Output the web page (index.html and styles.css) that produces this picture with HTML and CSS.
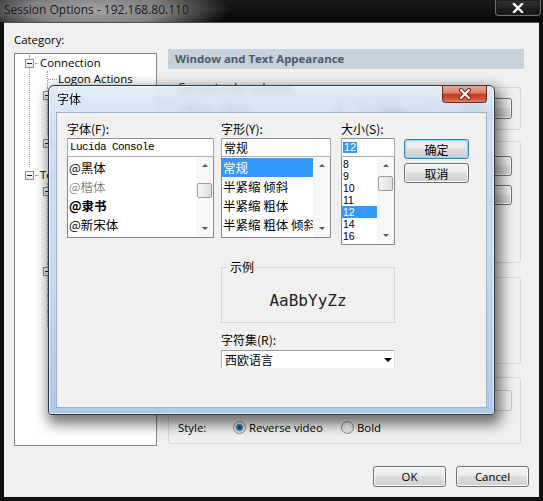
FILE: index.html
```html
<!DOCTYPE html>
<html>
<head>
<meta charset="utf-8">
<title>Session Options</title>
<link rel="stylesheet" href="styles.css">
</head>
<body>
<div class="window">
  <div class="titlebar">
    <span class="wtitle">Session Options - 192.168.80.110</span>
    <div class="wclose"><svg width="12" height="10" viewBox="0 0 12 10"><path d="M2 1 L10 9 M10 1 L2 9" stroke="#fff" stroke-width="2.4" stroke-linecap="square"/></svg></div>
  </div>
  <div class="client">
    <div class="main">
      <div class="left">
        <div class="cat-label">Category:</div>
        <div class="tree">
          <ul class="tv">
            <li>
              <div class="tr"><i class="exp"></i><i class="hl"></i><span>Connection</span></div>
              <ul>
                <li><div class="tr"><i class="hl2"></i><span>Logon Actions</span></div></li>
                <li>
                  <div class="tr"><i class="exp"></i><i class="hl"></i></div>
                  <ul>
                    <li><div class="tr"><i class="hl2"></i></div></li>
                    <li><div class="tr"><i class="hl2"></i></div></li>
                  </ul>
                </li>
                <li>
                  <div class="tr"><i class="exp"></i><i class="hl"></i></div>
                  <ul>
                    <li><div class="tr"><i class="hl2"></i></div></li>
                  </ul>
                </li>
              </ul>
            </li>
            <li>
              <div class="tr"><i class="exp"></i><i class="hl"></i><span>Terminal</span></div>
              <ul>
                <li>
                  <div class="tr"><i class="exp"></i><i class="hl"></i></div>
                  <ul>
                    <li><div class="tr"><i class="hl2"></i></div></li>
                    <li><div class="tr"><i class="hl2"></i></div></li>
                    <li><div class="tr"><i class="hl2"></i></div></li>
                    <li><div class="tr"><i class="hl2"></i></div></li>
                  </ul>
                </li>
                <li>
                  <div class="tr"><i class="exp"></i><i class="hl"></i></div>
                  <ul>
                    <li><div class="tr"><i class="hl2"></i></div></li>
                  </ul>
                </li>
                <li><div class="tr"><i class="hl2"></i></div></li>
                <li><div class="tr"><i class="hl2"></i></div></li>
                <li><div class="tr"><i class="hl2"></i></div></li>
              </ul>
            </li>
          </ul>
        </div>
      </div>
      <div class="panel">
        <div class="phead">Window and Text Appearance</div>
        <fieldset class="grp g1">
          <legend>Current color scheme</legend>
          <div class="grow">
            <div class="pcombo">White / Black<i class="dd"></i></div>
            <button class="btn pbtn">New...</button>
            <button class="btn pbtn">Edit...</button>
          </div>
        </fieldset>
        <fieldset class="grp g2">
          <div class="grow r1"><span class="gtext"></span><button class="btn pbtn2"></button></div>
          <div class="grow r2"><span class="gtext"></span><button class="btn pbtn2"></button></div>
        </fieldset>
        <fieldset class="grp g3">
        </fieldset>
        <fieldset class="grp g4">
          <div class="grow r1"><span class="gtext"></span><div class="pbox"></div></div>
          <div class="style-row">
            <span class="slabel">Style:</span>
            <span class="ropt"><i class="radio on"></i><span>Reverse video</span></span>
            <span class="ropt"><i class="radio"></i><span>Bold</span></span>
          </div>
        </fieldset>
      </div>
    </div>
    <div class="footer">
      <button class="btn fbtn">OK</button>
      <button class="btn fbtn">Cancel</button>
    </div>
  </div>

  <div class="dialog">
    <div class="dlg-title">
      <span class="dt">字体</span>
      <div class="dlg-close"><svg width="16" height="12" viewBox="0 0 16 12"><path d="M4 2 L12 10 M12 2 L4 10" stroke="#6a2418" stroke-width="4" stroke-linecap="round"/><path d="M4 2 L12 10 M12 2 L4 10" stroke="#fff" stroke-width="2.2" stroke-linecap="round"/></svg></div>
    </div>
    <div class="dlg-client">
      <div class="dlg-top">
        <div class="col col-font">
          <div class="dlabel">字体(F):</div>
          <div class="dinput mono">Lucida Console</div>
          <div class="dlist flist">
            <div class="items">
              <div class="it f1">@黑体</div>
              <div class="it f2">@楷体</div>
              <div class="it f3">@隶书</div>
              <div class="it f4">@新宋体</div>
            </div>
            <div class="sb"><div class="sba up"></div><div class="sbt"><div class="thumb t-font"></div></div><div class="sba dn"></div></div>
          </div>
        </div>
        <div class="col col-style">
          <div class="dlabel">字形(Y):</div>
          <div class="dinput">常规</div>
          <div class="dlist flist">
            <div class="items">
              <div class="it sel">常规</div>
              <div class="it">半紧缩 倾斜</div>
              <div class="it">半紧缩 粗体</div>
              <div class="it">半紧缩 粗体 倾斜</div>
            </div>
            <div class="sb"><div class="sba up"></div><div class="sbt"></div><div class="sba dn"></div></div>
          </div>
        </div>
        <div class="col col-size">
          <div class="dlabel">大小(S):</div>
          <div class="dinput"><span class="hi">12</span></div>
          <div class="dlist slist">
            <div class="items">
              <div class="it">8</div>
              <div class="it">9</div>
              <div class="it">10</div>
              <div class="it">11</div>
              <div class="it sel">12</div>
              <div class="it">14</div>
              <div class="it">16</div>
            </div>
            <div class="sb"><div class="sba up"></div><div class="sbt"><div class="thumb t-size"></div></div><div class="sba dn"></div></div>
          </div>
        </div>
        <div class="col col-btns">
          <button class="btn dbtn focus">确定</button>
          <button class="btn dbtn">取消</button>
        </div>
      </div>
      <div class="dlg-bottom">
        <fieldset class="sample">
          <legend>示例</legend>
          <div class="sample-text">AaBbYyZz</div>
        </fieldset>
        <div class="dlabel cs-label">字符集(R):</div>
        <div class="cs-combo"><span>西欧语言</span><i class="dd"></i></div>
      </div>
    </div>
  </div>
</div>
</body>
</html>
```

FILE: styles.css
```css
* { box-sizing: border-box; }
html, body { margin: 0; padding: 0; }
body {
  width: 543px;
  height: 501px;
  overflow: hidden;
  background: #0e0e0e;
  font-family: "Open Sans", "Noto Sans", sans-serif;
  font-size: 11.4px;
  color: #000;
}
button { font: inherit; color: #000; padding: 0; }

.window {
  position: relative;
  width: 543px;
  height: 501px;
  display: flex;
  flex-direction: column;
  background: #101010;
}

/* ---------- outer title bar ---------- */
.titlebar {
  height: 22px;
  display: flex;
  align-items: flex-start;
  background:
    radial-gradient(ellipse 135px 30px at 95px 10px, #a2a2a2 0%, #808080 50%, rgba(40,40,40,0) 100%),
    linear-gradient(#1a1a1a, #060606);
}
.wtitle {
  padding: 2px 0 0 4px;
  line-height: 16px;
  font-size: 12px;
  color: #1a1a1a;
  white-space: nowrap;
}
.wclose {
  margin-left: auto;
  margin-right: 2px;
  width: 46px;
  height: 16px;
  border: 1px solid #707070;
  border-top: 0;
  border-radius: 0 0 4px 4px;
  background: linear-gradient(#333, #111);
  box-shadow: inset 0 0 0 1px #1e1e1e;
  display: flex;
  align-items: center;
  justify-content: center;
}

/* ---------- client ---------- */
.client {
  flex: 1;
  margin: 0 4px 4px;
  background: #f0f0f0;
  border-top: 1px solid #505050;
  padding: 10px 10px 0 10px;
  display: flex;
  flex-direction: column;
}
.main { display: flex; align-items: flex-start; }
.left { width: 143px; }
.cat-label { height: 14px; line-height: 14px; }

.tree {
  margin-top: 6px;
  height: 393px;
  background: #fff;
  border: 1px solid #828790;
  padding-top: 1px;
  overflow: hidden;
}
.tv, .tv ul { list-style: none; margin: 0; padding: 0; }
.tv > li { margin-left: 14px; }
.tv ul > li { margin-left: 17px; }
.tv li { border-left: 1px solid transparent; }
.tv li:not(:last-child) { border-left: 1px dotted #a0a0a0; }
.tr {
  height: 16px;
  margin-left: -5px;
  display: flex;
  align-items: center;
  white-space: nowrap;
  line-height: 16px;
}
.exp {
  flex: none;
  width: 9px;
  height: 9px;
  border: 1px solid #919191;
  background: linear-gradient(#222, #222) center / 5px 1px no-repeat, linear-gradient(#fff, #e4e4e4);
}
.hl {
  flex: none;
  width: 4px;
  height: 1px;
  margin-left: 1px;
  border-top: 1px dotted #a0a0a0;
}
.hl2 {
  flex: none;
  width: 9px;
  height: 1px;
  margin-left: 5px;
  border-top: 1px dotted #a0a0a0;
}
.tr span { margin-left: 1px; }

/* ---------- right panel ---------- */
.panel { margin-left: 11px; margin-top: 16px; width: 356px; }
.phead {
  height: 20px;
  line-height: 20px;
  background: #c6d1dc;
  color: #4a5b6d;
  font-weight: 700;
  padding-left: 7px;
}
.grp {
  margin: 0 3px 0 0;
  padding: 0 8px 0 9px;
  border: 1px solid #d6d6d6;
  border-radius: 3px;
  min-width: 0;
}
.grp legend { padding: 0 2px; line-height: 12px; margin-left: -2px; }
.g1 { margin-top: 12px; height: 49px; padding-top: 5px; }
.g2 { margin-top: 11px; height: 122px; padding-top: 13px; }
.g3 { margin-top: 14px; height: 87px; }
.g4 { margin-top: 13px; height: 67px; padding-top: 12px; }
.grow { display: flex; align-items: center; gap: 8px; height: 21px; }
.g2 .r2 { margin-top: 8px; }
.gtext { flex: 1; white-space: nowrap; }
.pcombo {
  width: 170px;
  height: 21px;
  border: 1px solid #a0a0a0;
  background: #fff;
  display: flex;
  align-items: center;
  padding-left: 4px;
}
.pbtn { width: 72px; height: 21px; }
.g1 .pbtn:first-of-type { margin-left: auto; }
.pbtn2 { width: 130px; height: 20px; }
.pbox { width: 120px; height: 21px; border: 1px solid #c8c8c8; border-radius: 2px; background: #f4f4f4; }
.style-row { display: flex; align-items: center; height: 16px; margin-top: 8px; }
.slabel { width: 55px; }
.ropt { display: flex; align-items: center; gap: 3px; width: 108px; }
.radio {
  flex: none;
  width: 13px;
  height: 13px;
  border-radius: 50%;
  border: 1px solid #8e8f8f;
  background: radial-gradient(circle at 50% 40%, #ffffff, #d8d8d8);
}
.radio.on {
  background:
    radial-gradient(circle at 50% 50%, #0e3c5e 0, #2a76aa 2.4px, #6fb0dc 3.6px, rgba(255,255,255,0) 4.2px),
    radial-gradient(circle at 50% 40%, #ffffff, #d8d8d8);
}

.footer {
  display: flex;
  justify-content: flex-end;
  gap: 10px;
  margin-top: 20px;
}
.btn {
  border: 1px solid #707070;
  border-radius: 3px;
  background: linear-gradient(#f2f2f2 0%, #ebebeb 45%, #dddddd 50%, #cfcfcf 100%);
  box-shadow: inset 0 0 0 1px #fbfbfb;
}
.fbtn { width: 73px; height: 21px; }

/* ---------- font dialog ---------- */
.dialog {
  position: absolute;
  left: 48px;
  top: 85px;
  width: 447px;
  height: 330px;
  border: 1px solid #2f3945;
  border-radius: 6px 6px 3px 3px;
  padding: 0 7px 6px;
  display: flex;
  flex-direction: column;
  background: linear-gradient(to bottom, rgba(222,234,247,0.80) 0px, rgba(205,222,241,0.84) 28px, rgba(192,214,238,0.92) 60%, rgba(170,200,232,0.96) 100%);
  backdrop-filter: blur(3px);
  box-shadow: 3px 6px 14px 3px rgba(0,0,0,0.55), inset 0 0 0 1px rgba(255,255,255,0.6);
  font-family: "Noto Sans CJK SC", "Noto Sans", sans-serif;
  font-size: 12px;
}
.dlg-title { height: 26px; display: flex; align-items: flex-start; }
.dt { line-height: 26px; padding-left: 1px; }
.dlg-close {
  margin-left: auto;
  margin-top: 0;
  width: 45px;
  height: 17px;
  border: 1px solid #6b2a20;
  border-top: 0;
  border-radius: 0 0 4px 4px;
  background: linear-gradient(#e9a897 0%, #dd7d68 45%, #c13a20 50%, #cf5236 80%, #e2836a 100%);
  display: flex;
  align-items: center;
  justify-content: center;
}
.dlg-client {
  flex: 1;
  border: 1px solid #9fb3c8;
  background: #f0f0f0;
  padding: 10px 0 0 10px;
}
.dlg-top { display: flex; align-items: flex-start; }
.col-font { width: 147px; }
.col-style { width: 110px; margin-left: 7px; }
.col-size { width: 54px; margin-left: 10px; }
.col-btns {
  width: 65px;
  margin-left: 9px;
  padding-top: 16px;
  display: flex;
  flex-direction: column;
  gap: 4px;
}
.dlabel { height: 12px; line-height: 12px; margin-bottom: 3px; white-space: nowrap; }
.dinput {
  height: 19px;
  border: 1px solid #abadb3;
  border-top-color: #8e8f8f;
  background: #fff;
  line-height: 17px;
  padding-left: 2px;
  white-space: nowrap;
  overflow: hidden;
}
.mono {
  font-family: "Liberation Mono", monospace;
  font-size: 11px;
  letter-spacing: -0.6px;
}
.hi {
  display: inline-block;
  vertical-align: top;
  margin-top: 3px;
  line-height: 11px;
  height: 11px;
  padding: 0 1px;
  background: #3399ff;
  color: #fff;
  margin-left: -1px;
  font-family: "Liberation Sans", sans-serif;
  font-size: 11px;
}
.dlist {
  border: 1px solid #828790;
  border-top: 0;
  background: #fff;
  display: flex;
}
.flist { height: 81px; }
.slist { height: 88px; }
.items { flex: 1; min-width: 0; padding-top: 1px; overflow: hidden; }
.it {
  height: 19px;
  line-height: 19px;
  font-size: 12.5px;
  padding-left: 1px;
  white-space: nowrap;
  overflow: hidden;
}
.slist .it {
  height: 12px;
  line-height: 12px;
  font-family: "Liberation Sans", sans-serif;
  font-size: 10.5px;
}
.sel { background: #3399ff; color: #fff; }
.f2 { color: #555; font-weight: 300; }
.f3 { font-weight: 700; }
.sb {
  flex: none;
  width: 17px;
  display: flex;
  flex-direction: column;
  background: #f7f7f7;
}
.sba { height: 17px; display: flex; align-items: center; justify-content: center; }
.sba.up::after {
  content: "";
  border-left: 3px solid transparent;
  border-right: 3px solid transparent;
  border-bottom: 3px solid #5a5a5a;
}
.sba.dn::after {
  content: "";
  border-left: 3px solid transparent;
  border-right: 3px solid transparent;
  border-top: 3px solid #5a5a5a;
}
.sbt { flex: 1; }
.thumb {
  height: 15px;
  margin: 0 1px;
  border: 1px solid #9b9b9b;
  border-radius: 2px;
  background: linear-gradient(90deg, #f6f6f6, #dedede);
}
.t-font { margin-top: 9px; }
.t-size { margin-top: 2px; }
.dbtn { width: 65px; height: 20px; }
.dbtn.focus {
  border-color: #3c7fb1;
  box-shadow: inset 0 0 0 1px #8fd8f8, inset 0 0 3px 2px rgba(150,220,250,0.45);
}

.dlg-bottom { margin-left: 154px; width: 174px; margin-top: 16px; }
.sample {
  margin: 0;
  height: 62px;
  padding: 18px 0 0 6px;
  border: 1px solid #d5d5d5;
  min-width: 0;
}
.sample legend { padding: 0 2px; line-height: 12px; }
.sample-text {
  margin-left: -6px;
  text-align: center;
  font-family: "DejaVu Sans Mono", monospace;
  font-size: 16px;
  line-height: 20px;
  color: #222;
}
.cs-label { margin-top: 11px; margin-bottom: 0; }
.cs-combo {
  margin-top: 4px;
  height: 19px;
  background: #fff;
  border: 1px solid;
  border-color: #9a9a9a #e2e2e2 #f4f4f4 #b4b4b4;
  display: flex;
  align-items: center;
  padding-left: 3px;
}
.dd {
  margin-left: auto;
  margin-right: 2px;
  border-left: 4px solid transparent;
  border-right: 4px solid transparent;
  border-top: 4px solid #000;
}
.pcombo .dd { margin-right: 4px; }
```
